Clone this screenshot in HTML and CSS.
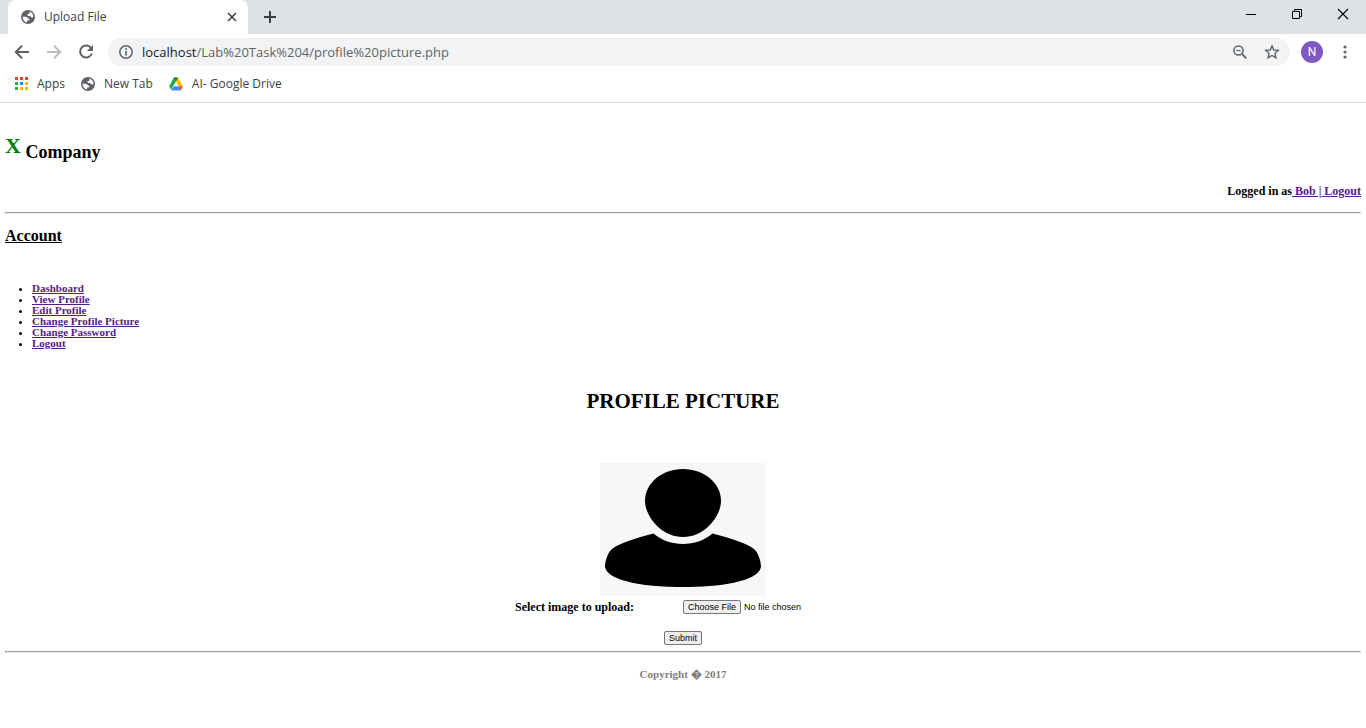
FILE: index.html
```html
<!DOCTYPE html>
<html lang="en">
<head>
<meta charset="utf-8">
<title>Upload File</title>
<link rel="stylesheet" href="styles.css">
</head>
<body>
<svg class="defs" aria-hidden="true">
  <symbol id="globe" viewBox="0 0 14 14">
    <circle cx="7" cy="7" r="7" fill="#5f6368"/>
    <path d="M1.500 6.800L4.500 6.800Q6.800 7 6.900 8.600L8.300 8.800V10.200L6 10.600V12.400Q1.800 11.700 1.500 6.800Z" fill="#fff"/>
    <path d="M8.600 1.600Q12.300 3 12.500 7.200L10.800 7.600Q9.800 7.500 9.600 6.200L7.300 6.100Q5.800 5.600 6.500 4.300L8.400 3.700Z" fill="#fff"/>
  </symbol>
</svg>
<header class="browser">
  <div class="tabstrip">
    <div class="tab">
      <svg class="icon14"><use href="#globe"/></svg>
      <span class="tab-title">Upload File</span>
      <button class="bare tab-close" aria-label="Close tab"><svg width="10" height="10" viewBox="0 0 10 10"><path d="M1 1L9 9M9 1L1 9" stroke="#3c4043" stroke-width="1.6"/></svg></button>
    </div>
    <button class="bare new-tab" aria-label="New tab"><svg width="12" height="12" viewBox="0 0 12 12"><path d="M6 0V12M0 6H12" stroke="#3c4043" stroke-width="2"/></svg></button>
    <div class="window-buttons">
      <button class="bare" aria-label="Minimize"><svg width="12" height="12" viewBox="0 0 12 12"><path d="M1 6.5H11" stroke="#000"/></svg></button>
      <button class="bare" aria-label="Restore"><svg width="12" height="12" viewBox="0 0 12 12"><path d="M1.5 3.5H8.500V10.500H1.500ZM3.500 3.500V1.500H10.500V8.500H8.500" fill="none" stroke="#000"/></svg></button>
      <button class="bare" aria-label="Close"><svg width="12" height="12" viewBox="0 0 12 12"><path d="M1 1L11 11M11 1L1 11" stroke="#000" stroke-width="1.100"/></svg></button>
    </div>
  </div>
  <div class="toolbar">
    <button class="bare nav" aria-label="Back"><svg width="16" height="16" viewBox="0 0 16 16"><path d="M15 8H2M8 1.700L1.800 8L8 14.300" fill="none" stroke="#5f6368" stroke-width="2"/></svg></button>
    <button class="bare nav" aria-label="Forward"><svg width="16" height="16" viewBox="0 0 16 16"><path d="M1 8H14M8 1.700L14.200 8L8 14.300" fill="none" stroke="#bbbdbf" stroke-width="2"/></svg></button>
    <button class="bare nav" aria-label="Reload"><svg width="16" height="16" viewBox="0 0 16 16"><path d="M13.300 4.500A6 6 0 1 0 13.800 9.500" fill="none" stroke="#5f6368" stroke-width="2"/><path d="M15 1V7H9Z" fill="#5f6368"/></svg></button>
    <div class="omnibox">
      <button class="bare" aria-label="Site information"><svg width="14" height="14" viewBox="0 0 14 14"><circle cx="7" cy="7" r="6.200" fill="none" stroke="#5f6368" stroke-width="1.500"/><path d="M7 6V10.500M7 3.300V5" stroke="#5f6368" stroke-width="1.600"/></svg></button>
      <span class="url" role="textbox" aria-label="Address" contenteditable="true" spellcheck="false"><span class="host">localhost</span>/Lab%20Task%204/profile%20picture.php</span>
      <button class="bare" aria-label="Zoom"><svg width="14" height="14" viewBox="0 0 14 14"><circle cx="5.500" cy="5.500" r="4.600" fill="none" stroke="#5f6368" stroke-width="1.500"/><path d="M3.300 5.500H7.700" stroke="#5f6368" stroke-width="1.200"/><path d="M8.900 8.900L13.300 13.300" stroke="#5f6368" stroke-width="1.900"/></svg></button>
      <button class="bare star" aria-label="Bookmark this tab"><svg width="16" height="16" viewBox="0 0 16 16"><path d="M8 1.900L9.800 6L14.300 6.400L10.900 9.400L11.900 13.800L8 11.500L4.100 13.800L5.100 9.400L1.700 6.400L6.200 6Z" fill="none" stroke="#5f6368" stroke-width="1.400"/></svg></button>
    </div>
    <button class="bare avatar" aria-label="Profile">N</button>
    <button class="bare more" aria-label="Menu"><svg width="4" height="14" viewBox="0 0 4 14" fill="#5f6368"><circle cx="2" cy="2" r="1.600"/><circle cx="2" cy="7" r="1.600"/><circle cx="2" cy="12" r="1.600"/></svg></button>
  </div>
  <nav class="bookmarks" aria-label="Bookmarks">
    <a href="#"><svg width="14" height="14" viewBox="0 0 14 14"><path fill="#ea4335" d="M1 0h3v3H1zM6 0h3v3H6zM11 0h3v3h-3z"/><path fill="#34a853" d="M1 5h3v3H1zM1 10h3v3H1z"/><path fill="#1a82f0" d="M6 5h3v3H6z"/><path fill="#fbb305" d="M11 5h3v3h-3zM6 10h3v3H6zM11 10h3v3h-3z"/></svg>Apps</a>
    <a href="#"><svg class="icon14"><use href="#globe"/></svg>New Tab</a>
    <a href="#"><svg width="14" height="14" viewBox="0 0 14 14"><path d="M4.800 0.500H7L7 4.600L3.500 10L2.200 12.900L0.200 9.300Z" fill="#21a453"/><path d="M4.800 0.500H9L13.900 9.300H9.400L7 4.600Z" fill="#ffba00"/><path d="M4.800 0.500H9L7 4.500Z" fill="#188038"/><path d="M4.500 9.300H9.500L11.700 13.400H2.300Z" fill="#4688f4"/><path d="M9.500 9.300H13.900L11.700 13.400Z" fill="#ea4335"/></svg>AI- Google Drive</a>
  </nav>
</header>
<main class="page">
  <h1 class="brand"><span class="brand-x">X</span> Company</h1>
  <p class="session">Logged in as<a href="#"> Bob |</a><a href="#"> Logout</a></p>
  <hr>
  <h2 class="account">Account</h2>
  <ul class="menu">
    <li><a href="#">Dashboard</a></li>
    <li><a href="#">View Profile</a></li>
    <li><a href="#">Edit Profile</a></li>
    <li><a href="#">Change Profile Picture</a></li>
    <li><a href="#">Change Password</a></li>
    <li><a href="#">Logout</a></li>
  </ul>
  <h2 class="title">PROFILE PICTURE</h2>
  <form class="upload">
    <svg class="picture" viewBox="0 0 166 133" role="img" aria-label="Profile picture">
      <path fill="#f7f7f7" d="M0 0H166V133H0Z"/>
      <path d="M83 6C104 6 121 20 121 38C121 52 106 74 83 74C60 74 45 52 45 38C45 20 62 6 83 6Z"/>
      <path d="M53.500 70.500C70 84.500 96 84.500 112.500 70.500C130 75 148 81 154 86C158 89 161 98 161 104C158 119 118 124 83 124C48 124 8 119 5 104C5 98 8 89 12 86C18 81 36 75 53.500 70.500Z"/>
    </svg>
    <div class="file-row">
      <label for="image">Select image to upload:</label>
      <input type="file" id="image">
    </div>
    <button class="submit" type="submit">Submit</button>
  </form>
  <hr>
  <footer class="copyright">Copyright &#xFFFD; 2017</footer>
</main>
</body>
</html>
```

FILE: styles.css
```css
* { box-sizing: border-box; }
body { margin: 0; background: #fff; color: #000; }
.defs { display: none; }
svg { display: block; flex: none; }
.icon14 { width: 14px; height: 14px; }
.bare { display: flex; align-items: center; justify-content: center; border: 0; padding: 0; background: none; flex: none; }

.browser { font: 12px/16px "Segoe UI", "Open Sans", "Noto Sans", sans-serif; color: #3c4043; border-bottom: 1px solid #d9dadb; }
.tabstrip { display: flex; align-items: stretch; height: 34px; padding-left: 8px; background: #dee1e6; }
.tab { display: flex; align-items: center; gap: 9px; width: 240px; padding: 0 11px 0 13px; background: #fff; border-radius: 8px 8px 0 0; }
.tab-title { flex: 1; }
.new-tab { width: 44px; }
.window-buttons { display: flex; margin-left: auto; padding-bottom: 6px; }
.window-buttons button { width: 46px; }
.toolbar { display: flex; align-items: center; height: 36px; padding: 0 7px 0 6px; }
.nav { width: 32px; height: 28px; }
.omnibox { display: flex; align-items: center; flex: 1; height: 28px; margin-left: 6px; padding: 0 10px 0 11px; background: #f1f3f4; border-radius: 14px; }
.url { flex: 1; margin-left: 9px; font-size: 13px; line-height: 20px; color: #5f6368; outline: 0; }
.host { color: #202124; }
.star { margin-left: 17px; }
.avatar { width: 22px; height: 22px; margin-left: 11px; border-radius: 50%; background: #7e57c2; color: #fff; font: 12px/16px Roboto, sans-serif; }
.more { width: 28px; height: 28px; margin-left: 8px; }
.bookmarks { display: flex; gap: 16px; height: 32px; align-items: center; padding: 0 14px 4px; }
.bookmarks a { display: flex; align-items: center; gap: 9px; color: #3c4043; text-decoration: none; }

.page { padding: 31px 5px 0; font: bold 12px/14px "Times New Roman", "Liberation Serif", serif; }
.page a { color: #551a8b; }
.page hr { margin: 0; border: 1px solid #9a9a9a; border-right-color: #eee; border-bottom-color: #eee; }
.brand { margin: 0; font-size: 18px; line-height: 36px; }
.brand-x { color: green; font-size: 22px; line-height: 24px; vertical-align: 5px; }
.session { margin: 14px 0; text-align: right; white-space: pre-wrap; }
.account { margin: 12px 0 0; font-size: 16px; line-height: 20px; text-decoration: underline; }
.menu { margin: 37px 0 0; padding-left: 27px; font-size: 11px; line-height: 11px; }
.title { margin: 40px 0 0; font-size: 21px; line-height: 24px; text-align: center; }
.upload { display: flex; flex-direction: column; align-items: center; margin: 50px 0 6px; }
.picture { width: 166px; height: 133px; }
.file-row { display: flex; align-items: flex-start; gap: 44px; margin: 4px 0 15px; }
.file-row label { min-width: 124px; }
.file-row input { width: 168px; height: 16px; font: 9px/12px Arial, "Liberation Sans", sans-serif; }
.file-row input::file-selector-button, .submit { height: 14px; margin: 0 3px 0 0; padding: 0 4px; border: 1px solid #767676; border-radius: 2px; background: #efefef; color: #000; font: 9px/12px Arial, "Liberation Sans", sans-serif; }
.submit { margin: 0; }
.copyright { padding: 15px 0; font-size: 11px; line-height: 12px; text-align: center; color: #808080; }
```
